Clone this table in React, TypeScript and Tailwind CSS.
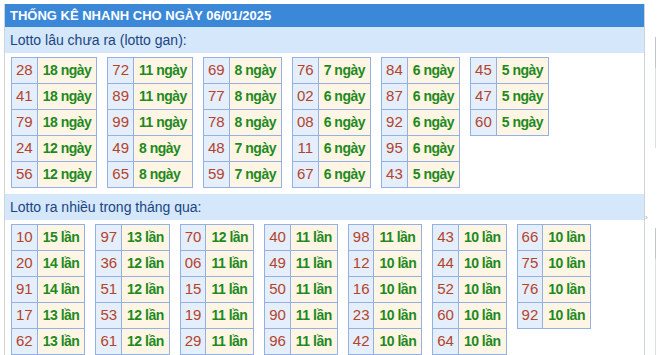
import React from 'react';

type Cell = [string, number];

const ganTables: Cell[][] = [
    [['28', 18], ['41', 18], ['79', 18], ['24', 12], ['56', 12]],
    [['72', 11], ['89', 11], ['99', 11], ['49', 8], ['65', 8]],
    [['69', 8], ['77', 8], ['78', 8], ['48', 7], ['59', 7]],
    [['76', 7], ['02', 6], ['08', 6], ['11', 6], ['67', 6]],
    [['84', 6], ['87', 6], ['92', 6], ['95', 6], ['43', 5]],
    [['45', 5], ['47', 5], ['60', 5]],
];

const monthTables: Cell[][] = [
    [['10', 15], ['20', 14], ['91', 14], ['17', 13], ['62', 13]],
    [['97', 13], ['36', 12], ['51', 12], ['53', 12], ['61', 12]],
    [['70', 12], ['06', 11], ['15', 11], ['19', 11], ['29', 11]],
    [['40', 11], ['49', 11], ['50', 11], ['90', 11], ['96', 11]],
    [['98', 11], ['12', 10], ['16', 10], ['23', 10], ['42', 10]],
    [['43', 10], ['44', 10], ['52', 10], ['60', 10], ['64', 10]],
    [['66', 10], ['75', 10], ['76', 10], ['92', 10]],
];

const LottoTable: React.FC<{ rows: Cell[]; unit: string }> = ({ rows, unit }) => (
    <div className="inline-grid grid-cols-[auto_auto] self-start border-l border-t border-[#93b1e3]">
        {rows.map(([num, count]) => (
            <React.Fragment key={num}>
                <div className="h-[26px] px-[4px] flex items-center justify-center bg-[#e5eefb] border-r border-b border-[#93b1e3] text-[15px] text-[#b3432b]">
                    {num}
                </div>
                <div className="h-[26px] px-[5px] flex items-center bg-[#fef5e4] border-r border-b border-[#93b1e3] text-[14px] tracking-[-0.5px] font-bold text-[#1e8a1e] whitespace-nowrap">
                    {count} {unit}
                </div>
            </React.Fragment>
        ))}
    </div>
);

const SectionTitle: React.FC<{ title: string }> = ({ title }) => (
    <div className="h-[26px] flex items-center pl-[5px] bg-[#d5e7fa] text-[14px] text-[#1a4583]">
        {title}
    </div>
);

const App: React.FC = () => {
    return (
        <div className="flex bg-white min-h-[355px] overflow-hidden" style={{ fontFamily: '"Liberation Sans", Arial, sans-serif' }}>
            <div className="pl-[4px] pt-[4px] shrink-0">
                <div className="w-[641px] border-x border-[#ccd3db] pb-[6px]">
                    <div className="h-[23px] flex items-center pl-[5px] bg-[#3b88d9] text-white text-[13px] font-bold">
                        THỐNG KÊ NHANH CHO NGÀY 06/01/2025
                    </div>
                    <SectionTitle title="Lotto lâu chưa ra (lotto gan):" />
                    <div className="flex gap-[10px] pl-[6px] pt-[4px] pb-[6px]">
                        {ganTables.map((t, i) => (
                            <LottoTable key={i} rows={t} unit="ngày" />
                        ))}
                    </div>
                    <SectionTitle title="Lotto ra nhiều trong tháng qua:" />
                    <div className="flex gap-[10px] pl-[6px] pt-[4px]">
                        {monthTables.map((t, i) => (
                            <LottoTable key={i} rows={t} unit="lần" />
                        ))}
                    </div>
                </div>
            </div>
            <div className="w-[10px] shrink-0 pt-[214px] text-[8px] leading-none text-[#9aa0a6]">›</div>
            <div className="shrink-0 flex flex-col">
                <div className="mt-[37px] w-[80px] h-[111px] border-l border-[#dcdfe3]">
                    <div className="h-[31px] border-l border-[#c2c6cb] -ml-px" />
                </div>
                <div className="mt-[80px] w-[80px] h-[200px] border-l border-[#dcdfe3]">
                    <div className="h-[31px] border-l border-[#c2c6cb] -ml-px" />
                </div>
            </div>
        </div>
    );
};

export default App;
